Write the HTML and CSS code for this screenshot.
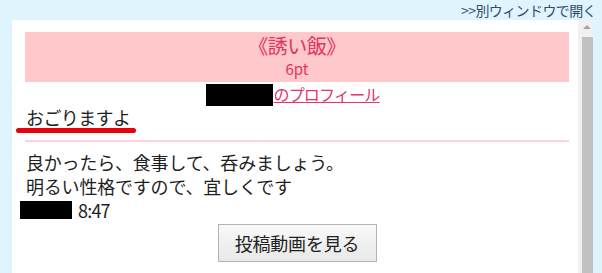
FILE: index.html
```html
<!DOCTYPE html>
<html lang="ja">
<head>
<meta charset="utf-8">
<link rel="stylesheet" href="styles.css">
</head>
<body>
<div class="top"><a class="open" href="#">&gt;&gt;別ウィンドウで開く</a></div>
<div class="panel">
  <div class="content">
    <div class="band">
      <div class="title">《誘い飯》</div>
      <div class="pt">6pt</div>
    </div>
    <div class="profile"><span class="mask name"></span><a href="#" class="plink">のプロフィール</a></div>
    <div class="subject">おごりますよ</div>
    <div class="redbar"></div>
    <div class="rule"></div>
    <div class="body">
      <div class="line">良かったら、食事して、呑みましょう。</div>
      <div class="line">明るい性格ですので、宜しくです</div>
      <div class="line meta"><span class="mask date"></span><span class="time">8:47</span></div>
    </div>
    <div class="actions"><button class="btn">投稿動画を見る</button></div>
  </div>
  <div class="scroll">
    <div class="arrow"></div>
    <div class="thumb"></div>
  </div>
</div>
</body>
</html>
```
FILE: styles.css
```css
html, body {
  margin: 0;
  padding: 0;
  height: 100%;
  overflow: hidden;
}
body {
  background: #dff4fc;
  font-family: "Noto Sans CJK JP", "Noto Sans", sans-serif;
  color: #1e1e1e;
}
.top {
  height: 20px;
  display: flex;
  justify-content: flex-end;
  align-items: center;
  padding-right: 6px;
}
.open {
  font-size: 14px;
  color: #2f4f6e;
  text-decoration: none;
  letter-spacing: -0.6px;
  line-height: 20px;
}
.panel {
  margin-left: 12px;
  width: 581px;
  height: 253px;
  background: #ffffff;
  display: flex;
}
.content {
  flex: 1;
  padding: 12px 9px 0 13px;
}
.band {
  background: #ffc8ca;
  height: 50px;
  display: flex;
  flex-direction: column;
  align-items: center;
  color: #e2345c;
}
.title {
  font-size: 20px;
  line-height: 27px;
  letter-spacing: -0.5px;
}
.pt {
  font-size: 15px;
  line-height: 20px;
}
.profile {
  height: 24px;
  display: flex;
  justify-content: center;
  align-items: flex-start;
  padding-right: 8px;
}
.mask {
  display: inline-block;
  background: #000;
}
.name {
  width: 67px;
  height: 22px;
  margin-top: 2px;
}
.plink {
  color: #e2346e;
  font-size: 16px;
  line-height: 24px;
  letter-spacing: -0.8px;
  text-decoration: underline;
}
.subject {
  font-size: 18px;
  line-height: 22px;
  padding-left: 1px;
  letter-spacing: -0.6px;
}
.redbar {
  margin-left: -9px;
  width: 120px;
  height: 5px;
  border-radius: 3px;
  background: #e6000c;
}
.rule {
  margin-top: 7px;
  height: 2px;
  background: #fbd3d9;
}
.body {
  margin-top: 8px;
  font-size: 18px;
  line-height: 24px;
  padding-left: 1px;
}
.line {
  letter-spacing: -0.2px;
  height: 24px;
}
.meta {
  display: flex;
  align-items: center;
  margin-left: -6px;
}
.date {
  width: 52px;
  height: 18px;
}
.time {
  margin-left: 6px;
  font-size: 18px;
  letter-spacing: -0.8px;
}
.actions {
  display: flex;
  justify-content: center;
  margin-top: 2px;
}
.btn {
  font-family: "Noto Sans CJK JP", "Noto Sans", sans-serif;
  font-size: 18px;
  color: #222;
  width: 159px;
  height: 38px;
  border: 1px solid #b3b3b3;
  background: linear-gradient(#f9f9f9, #e8e8e8);
  padding: 0;
  letter-spacing: -0.2px;
}
.scroll {
  width: 15px;
  background: #f0f0f0;
  display: flex;
  flex-direction: column;
  align-items: flex-end;
}
.arrow {
  width: 0;
  height: 0;
  margin: 5px 2px 0 0;
  border-left: 4px solid transparent;
  border-right: 4px solid transparent;
  border-bottom: 4px solid #a3a3a3;
}
.thumb {
  margin-top: 8px;
  width: 11px;
  flex: 1;
  background: #c1c1c1;
}
```
